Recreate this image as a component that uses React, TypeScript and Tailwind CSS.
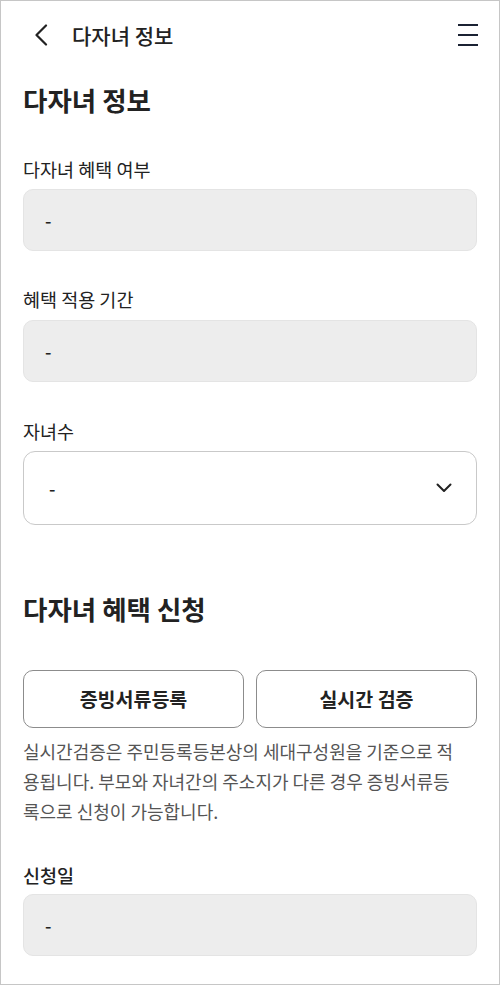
import React from 'react'

const font = { fontFamily: '"Noto Sans CJK KR", "Noto Sans", sans-serif' }

const ReadonlyField = ({ value }: { value: string }) => (
  <div className="flex h-[62px] items-center rounded-[10px] border border-[#e4e4e4] bg-[#ededed] px-[21px] text-[18px] font-medium text-[#222]">
    {value}
  </div>
)

const Label = ({ text, strong }: { text: string; strong?: boolean }) => (
  <div className={`text-[18.5px] leading-[26px] text-[#222] ${strong ? 'font-medium' : ''}`}>{text}</div>
)

export default function App() {
  return (
    <div style={font} className="h-[985px] w-[500px] overflow-hidden border border-[#c6c6c6] bg-white">
      {/* 헤더 */}
      <div className="flex h-[67px] items-center justify-between pl-[32px] pr-[20px]">
        <div className="flex items-center">
          <svg width="16" height="22" viewBox="0 0 16 22" fill="none">
            <path d="M13 1.5 3.5 11 13 20.5" stroke="#222" strokeWidth="2.2" strokeLinecap="round" strokeLinejoin="round" />
          </svg>
          <span className="ml-[23px] text-[21px] font-medium leading-[28px] text-[#222]">다자녀 정보</span>
        </div>
        <svg width="22" height="24" viewBox="0 0 22 24" fill="none">
          <path d="M1 2h20M1 12h20M1 22h20" stroke="#1b2233" strokeWidth="2" />
        </svg>
      </div>

      <div className="px-[22px]">
        <div className="mt-[14px] text-[26.5px] font-bold leading-[36px] text-[#222]">다자녀 정보</div>

        <div className="mt-[38px]">
          <Label text="다자녀 혜택 여부" />
        </div>
        <div className="mt-[7px]">
          <ReadonlyField value="-" />
        </div>

        <div className="mt-[35px]">
          <Label text="혜택 적용 기간" />
        </div>
        <div className="mt-[8px]">
          <ReadonlyField value="-" />
        </div>

        <div className="mt-[36px]">
          <Label text="자녀수" />
        </div>
        <div className="mt-[7px] flex h-[74px] items-center justify-between rounded-[12px] border border-[#c9c9c9] bg-white pl-[25px] pr-[24px] text-[18px] font-medium text-[#222]">
          <span>-</span>
          <svg width="16" height="10" viewBox="0 0 16 10" fill="none">
            <path d="M1.5 1.5 8 8l6.5-6.5" stroke="#222" strokeWidth="2" strokeLinecap="round" strokeLinejoin="round" />
          </svg>
        </div>

        <div className="mt-[66px] text-[26.5px] font-bold leading-[36px] text-[#222]">다자녀 혜택 신청</div>

        <div className="mt-[43px] grid grid-cols-2 gap-[12px]">
          <button className="h-[58px] rounded-[10px] border border-[#8c8c8c] bg-white text-[19.5px] font-bold text-[#222]">
            증빙서류등록
          </button>
          <button className="h-[58px] rounded-[10px] border border-[#8c8c8c] bg-white text-[19.5px] font-bold text-[#222]">
            실시간 검증
          </button>
        </div>

        <p className="mt-[8px] text-[18px] leading-[30px] text-[#555]">
          실시간검증은 주민등록등본상의 세대구성원을 기준으로 적<br />
          용됩니다. 부모와 자녀간의 주소지가 다른 경우 증빙서류등<br />
          록으로 신청이 가능합니다.
        </p>

        <div className="mt-[36px]">
          <Label text="신청일" strong />
        </div>
        <div className="mt-[6px]">
          <ReadonlyField value="-" />
        </div>
      </div>
    </div>
  )
}
